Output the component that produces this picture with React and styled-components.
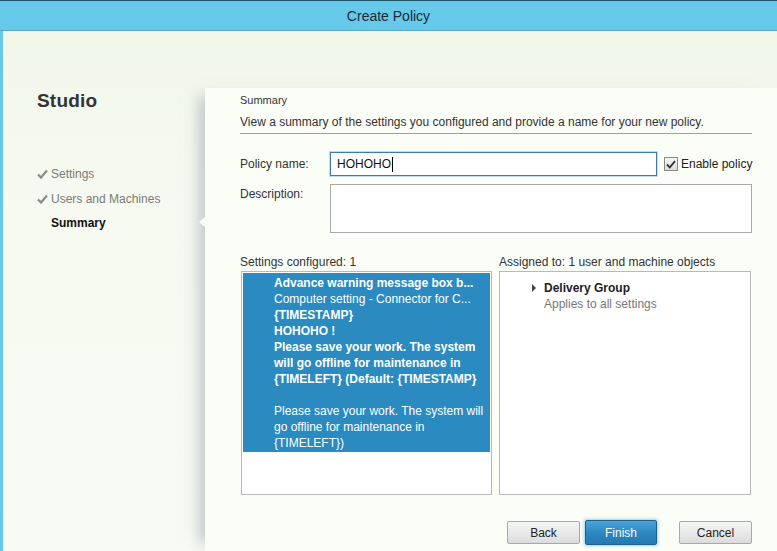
import React from "react";
import styled, { createGlobalStyle } from "styled-components";

const GlobalStyle = createGlobalStyle`
  html, body {
    margin: 0;
    padding: 0;
    width: 777px;
    height: 551px;
    overflow: hidden;
    font-family: "Segoe UI", "Liberation Sans", Arial, sans-serif;
  }
`;

const Window = styled.div`
  width: 777px;
  height: 551px;
  display: flex;
  flex-direction: column;
  background: #f4f8ec;
`;

const TitleBar = styled.div`
  height: 29px;
  flex-shrink: 0;
  display: flex;
  align-items: center;
  justify-content: center;
  background: #66c9ea;
  border-top: 1px solid #1b5568;
  border-bottom: 1px solid #58a9c6;
  color: #1c2a33;
  font-size: 14px;
`;

const Body = styled.div`
  flex: 1;
  display: flex;
  border-left: 3px solid #66c9ea;
  background: linear-gradient(180deg, #f2f7ea 0%, #f7faf1 40%, #f8fbf3 100%);
`;

const Sidebar = styled.div`
  width: 168px;
  flex-shrink: 0;
  padding: 59px 0 0 34px;
`;

const Brand = styled.div`
  font-size: 19px;
  color: #333;
  font-weight: 600;
  letter-spacing: 0.2px;
  margin-bottom: 50px;
`;

const Step = styled.div`
  display: flex;
  align-items: center;
  height: 24.5px;
  font-size: 12px;
  color: ${({ $active }) => ($active ? "#111" : "#7a7a7a")};
  font-weight: ${({ $active }) => ($active ? 700 : 400)};
`;

const Check = styled.span`
  width: 14px;
  color: #8c8c8c;
  font-size: 12px;
  display: inline-flex;
`;

const Main = styled.div`
  position: relative;
  flex: 1;
  min-width: 0;
  margin-top: 57px;
  padding: 5px 25px 0 35px;
  background: #fbfdf7;
  box-shadow: -14px 0 14px -8px rgba(150, 155, 170, 0.55);
  display: flex;
  flex-direction: column;
`;

const Notch = styled.div`
  position: absolute;
  left: -6px;
  top: 129px;
  width: 0;
  height: 0;
  border-top: 5px solid transparent;
  border-bottom: 5px solid transparent;
  border-right: 6px solid #fbfdf7;
`;

const PageTitle = styled.div`
  font-size: 11px;
  color: #333;
  line-height: 14px;
`;

const Intro = styled.div`
  margin-top: 8px;
  font-size: 12px;
  color: #333;
  line-height: 15px;
  padding-bottom: 3px;
  border-bottom: 1px solid #a0a0a0;
`;

const FormRow = styled.div`
  display: flex;
  align-items: ${({ $top }) => ($top ? "flex-start" : "center")};
  margin-top: ${({ $gap }) => $gap}px;
`;

const Label = styled.div`
  width: 90px;
  flex-shrink: 0;
  font-size: 12px;
  color: #333;
  padding-top: ${({ $top }) => ($top ? "3px" : "0")};
`;

const NameInput = styled.div`
  width: 319px;
  height: 22px;
  flex-shrink: 0;
  border: 1px solid #3d7bab;
  box-shadow: 0 0 0 1px #c3dcee;
  background: #fff;
  display: flex;
  align-items: center;
  padding-left: 6px;
  font-size: 12px;
  color: #111;
`;

const Caret = styled.span`
  display: inline-block;
  width: 1px;
  height: 15px;
  background: #000;
  margin-left: 1px;
`;

const CheckLabel = styled.label`
  display: flex;
  align-items: center;
  flex-shrink: 0;
  white-space: nowrap;
  margin-left: 7px;
  font-size: 12px;
  color: #222;
  gap: 3px;
`;

const CheckBox = styled.span`
  width: 12px;
  height: 12px;
  border: 1px solid #8a8a8a;
  background: linear-gradient(#f4f4f4, #dcdcdc);
  display: inline-flex;
  align-items: center;
  justify-content: center;
`;

const TextArea = styled.div`
  width: 420px;
  height: 47px;
  flex-shrink: 0;
  border: 1px solid #a9a9a9;
  background: #fff;
`;

const Lists = styled.div`
  margin-top: 22px;
  display: grid;
  grid-template-columns: 252px 252px;
  column-gap: 7px;
`;

const ListCol = styled.div`
  display: flex;
  flex-direction: column;
`;

const ListLabel = styled.div`
  font-size: 12px;
  color: #333;
  line-height: 15px;
  margin-bottom: 1px;
  white-space: nowrap;
`;

const ListBox = styled.div`
  height: 220px;
  border: 1px solid #b9b9b9;
  background: #fff;
  padding: 1px;
  margin-left: ${({ $offset }) => $offset || 0}px;
`;

const Selected = styled.div`
  background: #2b8ac0;
  color: #fff;
  padding: 2px 6px 1px 31px;
  font-size: 12px;
  line-height: 16px;
`;

const Line = styled.div`
  font-weight: ${({ $w }) => $w || 400};
  white-space: nowrap;
  min-height: 16px;
`;

const TreeItem = styled.div`
  display: flex;
  padding: 7px 0 0 29px;
  font-size: 12px;
  line-height: 16px;
`;

const Arrow = styled.span`
  width: 0;
  height: 0;
  margin: 4px 8px 0 2px;
  border-top: 4px solid transparent;
  border-bottom: 4px solid transparent;
  border-left: 4px solid #444;
`;

const ItemTitle = styled.div`
  font-weight: 700;
  color: #222;
`;

const ItemSub = styled.div`
  color: #777;
`;

const Footer = styled.div`
  display: flex;
  justify-content: flex-end;
  align-items: center;
  margin-top: 25px;
`;

const Button = styled.button`
  width: ${({ $primary }) => ($primary ? "72px" : "73px")};
  height: ${({ $primary }) => ($primary ? "25px" : "23px")};
  margin-left: ${({ $space }) => $space}px;
  font-family: inherit;
  font-size: 12px;
  border-radius: 2px;
  padding: 0;
  color: ${({ $primary }) => ($primary ? "#f4fbff" : "#222")};
  border: 1px solid ${({ $primary }) => ($primary ? "#1e5f8c" : "#a8a8a8")};
  background: ${({ $primary }) =>
    $primary
      ? "linear-gradient(#4aa4d8, #2c86bf 55%, #2679b2)"
      : "linear-gradient(#f5f5f5, #e9e9e9 50%, #dcdcdc)"};
  box-shadow: ${({ $primary }) =>
    $primary ? "0 0 3px 1px rgba(80, 170, 220, 0.55)" : "none"};
`;

const Tick = () => (
  <svg width="11" height="10" viewBox="0 0 11 10">
    <path d="M1 5.5 L4 8.5 L10 1.5" fill="none" stroke="#8a8a8a" strokeWidth="2.2" />
  </svg>
);

const BoxTick = () => (
  <svg width="10" height="9" viewBox="0 0 10 9">
    <path d="M1 4.5 L3.8 7.3 L9 1.2" fill="none" stroke="#333" strokeWidth="1.8" />
  </svg>
);

export default function App() {
  return (
    <Window>
      <GlobalStyle />
      <TitleBar>Create Policy</TitleBar>
      <Body>
        <Sidebar>
          <Brand>Studio</Brand>
          <Step>
            <Check>
              <Tick />
            </Check>
            Settings
          </Step>
          <Step>
            <Check>
              <Tick />
            </Check>
            Users and Machines
          </Step>
          <Step $active>
            <Check />
            Summary
          </Step>
        </Sidebar>
        <Main>
          <Notch />
          <PageTitle>Summary</PageTitle>
          <Intro>
            View a summary of the settings you configured and provide a name for your new policy.
          </Intro>
          <FormRow $gap={18}>
            <Label>Policy name:</Label>
            <NameInput>
              HOHOHO
              <Caret />
            </NameInput>
            <CheckLabel>
              <CheckBox>
                <BoxTick />
              </CheckBox>
              Enable policy
            </CheckLabel>
          </FormRow>
          <FormRow $gap={8} $top>
            <Label $top>Description:</Label>
            <TextArea />
          </FormRow>
          <Lists>
            <ListCol>
              <ListLabel>Settings configured: 1</ListLabel>
              <ListBox $offset={1}>
                <Selected>
                  <Line $w={700}>Advance warning message box b...</Line>
                  <Line>Computer setting - Connector for C...</Line>
                  <Line $w={600}>{"{TIMESTAMP}"}</Line>
                  <Line $w={600}>HOHOHO !</Line>
                  <Line $w={600}>Please save your work. The system</Line>
                  <Line $w={600}>will go offline for maintenance in</Line>
                  <Line $w={600}>{"{TIMELEFT} (Default: {TIMESTAMP}"}</Line>
                  <Line />
                  <Line>Please save your work. The system will</Line>
                  <Line>go offline for maintenance in</Line>
                  <Line>{"{TIMELEFT})"}</Line>
                </Selected>
              </ListBox>
            </ListCol>
            <ListCol>
              <ListLabel>Assigned to: 1 user and machine objects</ListLabel>
              <ListBox>
                <TreeItem>
                  <Arrow />
                  <div>
                    <ItemTitle>Delivery Group</ItemTitle>
                    <ItemSub>Applies to all settings</ItemSub>
                  </div>
                </TreeItem>
              </ListBox>
            </ListCol>
          </Lists>
          <Footer>
            <Button>Back</Button>
            <Button $primary $space={5}>
              Finish
            </Button>
            <Button $space={22}>Cancel</Button>
          </Footer>
        </Main>
      </Body>
    </Window>
  );
}
